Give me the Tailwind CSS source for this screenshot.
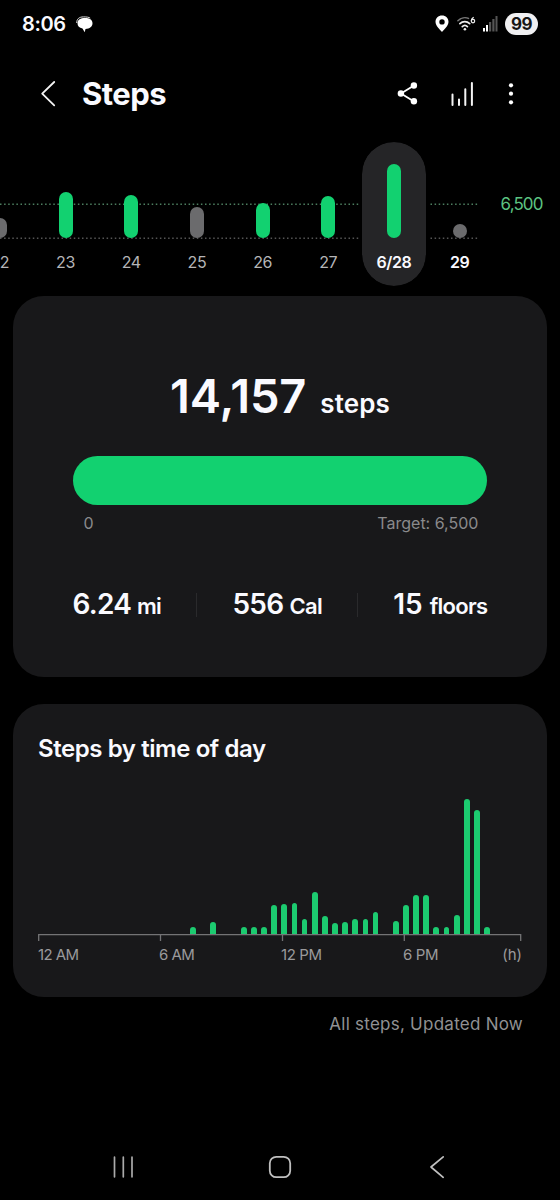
<!DOCTYPE html>
<html lang="en">
<head>
<meta charset="utf-8">
<title>Steps</title>
<script src="https://cdn.jsdelivr.net/npm/@tailwindcss/browser@4"></script>
</head>
<body class="bg-black">
<div class="flex h-[1200px] w-[560px] flex-col overflow-hidden bg-black font-['Inter',sans-serif] text-[#fafaff]">

  <!-- Status bar -->
  <div class="flex h-12 shrink-0 items-center pl-[22px] pr-[22px]">
    <span class="text-[20px] font-semibold leading-6 tracking-[-0.4px]">8:06</span>
    <svg class="ml-[10px]" width="17" height="17" viewBox="0 0 17 17"><path d="M.700 7C.700 3 3 .9 7.500.9c3.200 0 5.500.3 6.700 1.200" fill="none" stroke="#ddd" stroke-width="1"/><path d="M9 2.100c4.500 0 7.500 1.900 7.500 5.200 0 3.400-2.800 5.500-7 5.600L8.700 16.300 6.500 12.600C3.300 12 1.500 10 1.500 7.300 1.500 4 4.500 2.100 9 2.100z" fill="#fff"/></svg>
    <div class="ml-auto flex items-center">
      <svg width="14" height="18" viewBox="0 0 14 18"><path fill-rule="evenodd" d="M7 .6C3.200.6.500 3.300.500 6.800.500 11 5 14.500 7 17c2-2.500 6.500-6 6.500-10.200C13.500 3.300 10.800.6 7 .6zm0 3.600a2.700 2.700 0 1 1 0 5.400 2.700 2.700 0 0 1 0-5.400z" fill="#fff"/></svg>
      <svg class="ml-2" width="19" height="16" viewBox="0 0 19 16" fill="none" stroke-linecap="round"><path d="M.9 4.800C4 1.600 8.500 1 11.500 2.400" stroke="#777" stroke-width="1.500"/><path d="M2.900 7.700c2.800-2.700 7-2.700 9.800 0" stroke="#eee" stroke-width="1.700"/><path d="M5.300 10.600c1.500-1.500 3.600-1.500 5.100 0" stroke="#eee" stroke-width="1.700"/><circle cx="7.900" cy="13.300" r="1.300" fill="#eee"/><path d="M16.300 1.500c-1.300.8-1.900 2-2 3.300" stroke="#eee" stroke-width="1.200"/><circle cx="16" cy="5.100" r="1.700" stroke="#eee" stroke-width="1.200"/></svg>
      <svg class="ml-[7px]" width="15" height="16" viewBox="0 0 15 16"><rect x="0" y="12" width="2" height="3.500" fill="#fff"/><rect x="3" y="9" width="2" height="6.500" fill="#fff"/><rect x="6" y="6" width="2.200" height="9.500" fill="#555"/><rect x="9.300" y="3" width="2.200" height="12.500" fill="#555"/><rect x="12.500" y="0" width="2" height="15.500" fill="#555"/></svg>
      <span class="ml-[7px] flex h-[22px] w-[33px] items-center justify-center rounded-full bg-[#f0f0f2] text-[17px] font-bold leading-5 tracking-[-0.6px] text-[#161616]">99</span>
    </div>
  </div>

  <!-- App bar -->
  <div class="flex h-[92px] shrink-0 items-center pl-10 pr-[45.500px]">
    <svg width="16" height="28" viewBox="0 0 16 28"><path d="M14.200 2 2.200 13.700l12 11.700" fill="none" stroke="#f4f4f4" stroke-width="1.800" stroke-linecap="round" stroke-linejoin="round"/></svg>
    <h1 class="ml-[26px] text-[31px] font-bold leading-10 tracking-[-0.5px]">Steps</h1>
    <div class="ml-auto flex items-center">
      <svg width="22" height="24" viewBox="0 0 22 24"><path d="M17 3.500 4 11.500l13 8" fill="none" stroke="#fff" stroke-width="1.800"/><circle cx="16.900" cy="3.500" r="3.200" fill="#fff"/><circle cx="3.900" cy="11.500" r="3.200" fill="#fff"/><circle cx="16.900" cy="19.300" r="3.200" fill="#fff"/></svg>
      <svg class="ml-[32px]" width="24" height="26" viewBox="0 0 24 26" stroke="#f4f4f4" stroke-width="2" stroke-linecap="round"><path d="M1.500 13.500v10.500M8 18.500V24M14.300 8.200V24M20.900 2v22"/></svg>
      <svg class="ml-[31.500px]" width="8" height="24" viewBox="0 0 8 24" fill="#fff"><circle cx="4" cy="3.300" r="2.100"/><circle cx="4" cy="11.700" r="2.100"/><circle cx="4" cy="20.300" r="2.100"/></svg>
    </div>
  </div>

  <!-- Daily history strip -->
  <div class="relative h-[156px] shrink-0 overflow-hidden">
    <svg class="absolute left-0 top-0" width="480" height="156"><path d="M0 64.200H479" stroke="#4d7f60" stroke-width="1.400" stroke-dasharray="1.500 2.600"/><path d="M0 98.200H479" stroke="#555" stroke-width="1.400" stroke-dasharray="1.500 2.600"/></svg>
    <div class="relative flex">
      <div id="days" class="-ml-[33px] flex w-[525.600px] shrink-0 pt-[2px]"></div>
      <span class="ml-[8px] mt-[52px] text-[17px] leading-6 tracking-[-0.9px] text-[#5cc382]">6,500</span>
    </div>
  </div>

  <!-- Daily total -->
  <section class="mx-[13px] flex h-[381px] shrink-0 flex-col rounded-[31px] bg-[#18181a] px-[59.600px]">
    <div class="mt-[70px] flex h-[60px] items-baseline justify-center">
      <span class="text-[47px] font-semibold leading-[60px] tracking-[-0.1px]">14,157</span>
      <span class="ml-[14px] text-[26px] font-semibold leading-8 tracking-[0.1px]">steps</span>
    </div>
    <div class="mt-[29.500px] h-[49px] shrink-0 rounded-full bg-[#12d170]"></div>
    <div class="mt-[6.500px] flex justify-between pl-[11px] pr-[9px] text-[16px] leading-6 text-[#8a8a8c]">
      <span>0</span><span>Target: 6,500</span>
    </div>
    <div class="mt-[54px] flex h-8 items-center justify-between">
      <div class="flex items-baseline"><span class="text-[28px] font-semibold leading-8 tracking-[-0.8px]">6.24</span><span class="ml-[6px] text-[22px] font-semibold tracking-[-0.7px]">mi</span></div>
      <div class="h-[24px] w-px bg-[#2a2a2c]"></div>
      <div class="flex items-baseline"><span class="text-[28px] font-semibold leading-8 tracking-[-0.7px]">556</span><span class="ml-[6px] text-[22px] font-semibold tracking-[-0.7px]">Cal</span></div>
      <div class="h-[24px] w-px bg-[#2a2a2c]"></div>
      <div class="flex items-baseline"><span class="text-[28px] font-semibold leading-8">15</span><span class="ml-[7px] text-[22px] font-semibold tracking-[-0.700px]">floors</span></div>
    </div>
  </section>

  <!-- Hourly chart -->
  <section class="mx-[13px] mt-[27px] flex h-[293px] shrink-0 flex-col rounded-[31px] bg-[#18181a] pl-[25px]">
    <h2 class="mt-[29px] text-[24px] font-semibold leading-8 tracking-[-0.42px]">Steps by time of day</h2>
    <div id="hours" class="mt-[32px] flex h-[137px] w-[483px] items-end justify-between"></div>
    <svg class="shrink-0" width="484" height="9" viewBox="0 0 484 9" fill="none" stroke="#737375" stroke-width="1.300"><path d="M.7 7V.6h482V7M122.500.6V7M244.500.6V7M366.300.6V7"/></svg>
    <div class="mt-[2px] grid w-[484px] grid-cols-[121px_122px_122px_1fr_auto] text-[15px] leading-5 text-[#9a9a9c]">
      <span class="tracking-[-0.6px]">12 AM</span><span class="tracking-[-0.5px]">6 AM</span><span class="tracking-[-0.4px]">12 PM</span><span class="tracking-[-0.4px]">6 PM</span><span>(h)</span>
    </div>
  </section>

  <p class="mr-[37px] mt-[15px] text-right text-[17px] leading-6 tracking-[0.25px] text-[#919193]">All steps, Updated Now</p>

  <!-- System navigation -->
  <div class="mt-auto grid h-[66px] shrink-0 grid-cols-[156px_157px_16px] items-center pl-[112px]">
    <svg width="22" height="22" viewBox="0 0 22 22" stroke="#aaa" stroke-width="1.700" stroke-linecap="round"><path d="M2.500 1.200v19.600M11.300 1.200v19.600M20 1.200v19.600"/></svg>
    <svg width="24" height="24" viewBox="0 0 24 24"><rect x="1.800" y="1.800" width="20.400" height="20.400" rx="6.500" fill="none" stroke="#c0c0c0" stroke-width="1.800"/></svg>
    <svg class="ml-[4px]" width="16" height="24" viewBox="0 0 16 24"><path d="M14.200 1.800 2 12l12.200 10.300" fill="none" stroke="#c0c0c0" stroke-width="1.700" stroke-linecap="round" stroke-linejoin="round"/></svg>
  </div>
</div>
<script>
  const goal = 'bg-[#12d170]', missed = 'bg-[#6b6b6d]';
  const days = [['22', 20, missed], ['23', 46, goal], ['24', 43, goal], ['25', 31, missed], ['26', 35, goal], ['27', 42, goal], ['6/28', 74.500, goal], ['29', 14, missed]];
  document.getElementById('days').innerHTML = days.map(([label, h, color]) => {
    const selected = label === '6/28';
    const shell = selected ? 'bg-[#252527] outline-2 outline-black' : '';
    const text = selected || label === '29' ? 'font-semibold text-[#fafaff]' : 'text-[#b5b5b7]';
    return `<div class="flex h-[144px] w-[65.700px] justify-center"><div class="flex w-16 flex-col items-center rounded-full ${shell}"><div class="flex h-[96px] items-end"><div class="w-[14px] rounded-full ${color}" style="height:${h}px"></div></div><span class="mt-[12px] text-[16px] leading-6 tracking-[-0.4px] ${text}">${label}</span></div></div>`;
  }).join('');

  // Half-hour buckets, midnight to midnight
  const buckets = Array(48).fill(0);
  Object.assign(buckets, {15: 7, 17: 12.500, 20: 7, 21: 7, 22: 7, 23: 29, 24: 30, 25: 31, 26: 15, 27: 42.500, 28: 18, 29: 11, 30: 12, 31: 15, 32: 15, 33: 22, 35: 13, 36: 29, 37: 39, 38: 39, 39: 7, 40: 7, 41: 19, 42: 135.500, 43: 124, 44: 7});
  document.getElementById('hours').innerHTML = buckets.map(h => `<div class="w-[5.800px] rounded-t-full bg-[#1ccb70]" style="height:${h}px"></div>`).join('');
</script>
</body>
</html>
